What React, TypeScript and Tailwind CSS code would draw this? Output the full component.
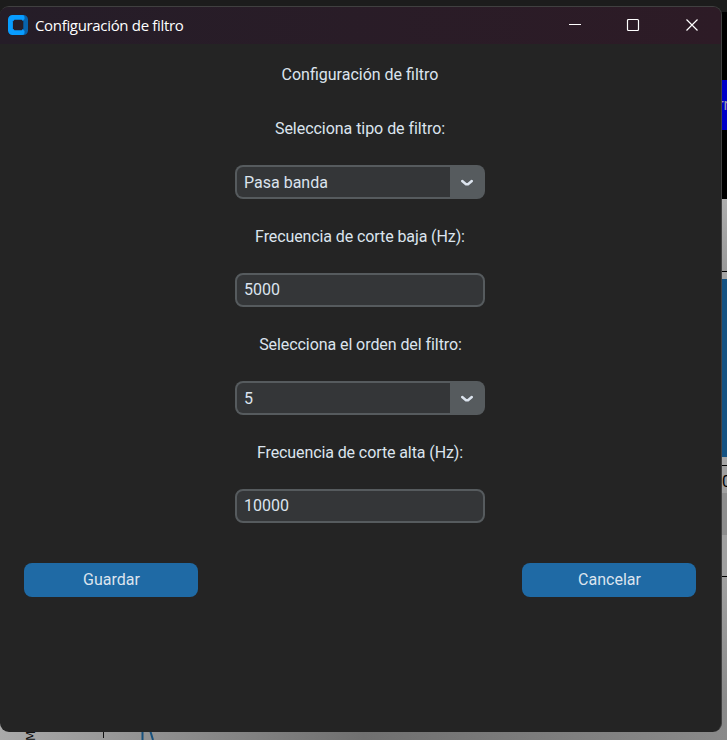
import React from "react";

function Label({ children, className = "" }: { children: React.ReactNode; className?: string }) {
  return (
    <div className={`flex h-[34px] items-center justify-center pt-px whitespace-nowrap ${className}`}>{children}</div>
  );
}

function Entry({ value }: { value: string }) {
  return (
    <div className="flex h-[34px] w-[250px] items-center rounded-[8px] border-2 border-[#565b5e] bg-[#343638] pb-px pl-[7px]">
      {value}
    </div>
  );
}

function Combo({ value }: { value: string }) {
  return (
    <div className="flex h-[34px] w-[250px] overflow-hidden rounded-[8px] bg-[#565b5e]">
      <div className="my-[2px] ml-[2px] flex w-[213px] items-center rounded-l-[6px] bg-[#343638] pt-[2px] pl-[7px]">{value}</div>
      <div className="flex flex-1 items-center justify-center pr-[2px]">
        <svg width="14" height="8" viewBox="0 0 14 8" className="mt-[2px]" fill="none" stroke="#dce4ee" strokeWidth="2.5" strokeLinecap="round" strokeLinejoin="round">
          <path d="M2.200 2L6 5.200H8L11.800 2" />
        </svg>
      </div>
    </div>
  );
}

function ActionButton({ children }: { children: React.ReactNode }) {
  return (
    <button className="flex h-[34px] w-[174px] items-center justify-center rounded-[8px] bg-[#1f6aa5] pb-px pl-px">
      {children}
    </button>
  );
}

function Backdrop() {
  return (
    <div className="flex h-full flex-col bg-[#1c1c1c]">
      <div className="h-[12px] shrink-0" />
      <div className="flex min-h-0 flex-1 justify-end">
        <div className="flex w-[30px] flex-col overflow-hidden bg-[#a0a0a0]">
          <div className="h-[68px] shrink-0 bg-black" />
          <div className="flex h-[50px] shrink-0 items-center justify-end bg-[#0000c8] text-[16px] text-[#9a9ab0]">
            <span className="-mr-[2px]">rr</span>
          </div>
          <div className="h-[69px] shrink-0 bg-black" />
          <div className="h-[72px] shrink-0 bg-linear-to-b from-[#adadad] to-[#999999]" />
          <div className="h-px shrink-0 bg-black" />
          <div className="h-[7px] shrink-0 bg-[#a5a5a5]" />
          <div className="h-[178px] shrink-0 bg-[#145282]" />
          <div className="h-[8px] shrink-0 bg-[#a5a5a5]" />
          <div className="h-px shrink-0 bg-black" />
          <div className="flex h-[27px] shrink-0 items-center justify-end text-[16px] text-black">
            <span className="-mr-[4px] mt-[4px]">0</span>
          </div>
          <div className="h-[42px] shrink-0 bg-[#8d8d8d]" />
          <div className="h-[41px] shrink-0" />
          <div className="h-px shrink-0 bg-black" />
          <div className="flex-1 bg-linear-to-b from-[#a0a0a0] to-[#8b8b8b]" />
        </div>
      </div>
      <div className="flex h-[40px] shrink-0 items-end bg-linear-to-r from-[#aaaaaa] via-[#707070] to-[#8a8a8a]">
        <svg width="240" height="10" viewBox="0 0 240 10" fill="none">
          <text transform="translate(35 11) rotate(-90)" fontFamily="DejaVu Sans" fontSize="12" fill="#111">M</text>
          <path d="M103.500 0V8" stroke="#111" />
          <path d="M142.500 0V10M150 0L153 10" stroke="#17517d" strokeWidth="2" />
        </svg>
      </div>
    </div>
  );
}

export default function App() {
  return (
    <div className="relative h-[740px] w-[727px] overflow-hidden font-[Roboto,sans-serif]">
      <Backdrop />
      <main className="absolute top-[6px] left-0 flex h-[726px] w-[722px] flex-col overflow-hidden rounded-[9px] border-t border-r border-[#404040] bg-[#242424] text-[16px] leading-[20px] text-[#dce4ee]">
        <header className="flex h-[37px] shrink-0 items-center bg-linear-to-r from-[#251d28] to-[#2d1b26] pl-[8px] text-white">
          <svg width="20" height="20" viewBox="0 0 20 20" className="mb-px shrink-0">
            <path d="M13 0h2.500A4.500 4.500 0 0 1 20 4.500v11a4.500 4.500 0 0 1-4.500 4.500H13z" fill="#0763ad" />
            <path d="M4.500 0h10A2 2 0 0 1 16.500 2v2L14.500 6V14l2 2v2a2 2 0 0 1-2 2h-10A4.500 4.500 0 0 1 0 15.500v-11A4.500 4.500 0 0 1 4.500 0z" fill="#089cff" />
            <path d="M6.500 4.800H13.700L15.300 6.400V13.600L13.700 15.200H6.500L4.900 13.600V6.400z" fill="#251d28" />
          </svg>
          <h1 className="ml-[7px] flex-1 pb-[2px] font-['Open_Sans',sans-serif] text-[15px] tracking-[-0.33px] whitespace-nowrap">
            Configuración de filtro
          </h1>
          <svg width="134" height="14" viewBox="0 0 134 14" className="mr-[21px] mb-px" fill="none" stroke="white" strokeWidth="1.200">
            <path d="M3 6.500H15" />
            <rect x="61.500" y="1.500" width="11" height="11" rx="1" />
            <path d="M120.500 1.500L131.500 12.500M131.500 1.500L120.500 12.500" />
          </svg>
        </header>
        <div className="flex flex-col items-center gap-[20px] pt-[13px] pr-px">
          <Label>Configuración de filtro</Label>
          <Label className="tracking-[-0.04px]">Selecciona tipo de filtro:</Label>
          <Combo value="Pasa banda" />
          <Label className="tracking-[-0.1px]">Frecuencia de corte baja (Hz):</Label>
          <Entry value="5000" />
          <Label className="pl-px tracking-[-0.07px]">Selecciona el orden del filtro:</Label>
          <Combo value="5" />
          <Label className="tracking-[-0.1px]">Frecuencia de corte alta (Hz):</Label>
          <Entry value="10000" />
        </div>
        <div className="flex justify-between pt-[40px] pr-[25px] pl-[24px]">
          <ActionButton>Guardar</ActionButton>
          <ActionButton>Cancelar</ActionButton>
        </div>
      </main>
    </div>
  );
}
